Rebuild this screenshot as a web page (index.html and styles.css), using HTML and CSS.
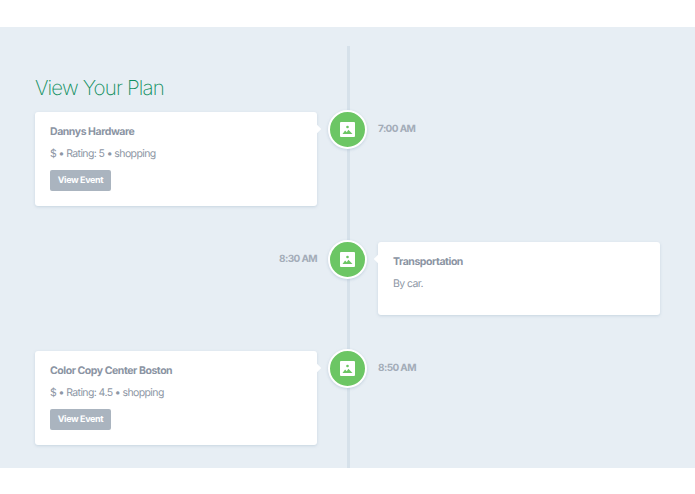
FILE: index.html
```html
<!DOCTYPE html>
<html lang="en">
<head>
    <meta charset="UTF-8">
    <meta name="viewport" content="width=device-width, initial-scale=1.0">
    <title>View Your Plan</title>
    <link rel="stylesheet" href="styles.css">
</head>
<body>

<div class="plan">
    <div class="line"></div>
    <h1>View Your Plan</h1>

    <div class="row">
        <div class="card card-left">
            <h3>Dannys Hardware</h3>
            <p>$ • Rating: 5 • shopping</p>
            <a class="btn">View Event</a>
        </div>
        <div class="dot">
            <svg viewBox="0 0 15 15" width="15" height="15"><path fill="#fff" d="M1 0h13a1 1 0 0 1 1 1v13a1 1 0 0 1-1 1H1a1 1 0 0 1-1-1V1a1 1 0 0 1 1-1z"/><circle cx="7.5" cy="5" r="1.3" fill="#6cc664"/><path fill="#6cc664" d="M2.5 12l2.6-3.6 1.7 1.9 1.6-2.6 4.1 4.3z"/></svg>
        </div>
        <div class="time">7:00 AM</div>
    </div>

    <div class="row">
        <div class="time time-left">8:30 AM</div>
        <div class="dot">
            <svg viewBox="0 0 15 15" width="15" height="15"><path fill="#fff" d="M1 0h13a1 1 0 0 1 1 1v13a1 1 0 0 1-1 1H1a1 1 0 0 1-1-1V1a1 1 0 0 1 1-1z"/><circle cx="7.5" cy="5" r="1.3" fill="#6cc664"/><path fill="#6cc664" d="M2.5 12l2.6-3.6 1.7 1.9 1.6-2.6 4.1 4.3z"/></svg>
        </div>
        <div class="card card-right">
            <h3>Transportation</h3>
            <p>By car.</p>
        </div>
    </div>

    <div class="row">
        <div class="card card-left">
            <h3>Color Copy Center Boston</h3>
            <p>$ • Rating: 4.5 • shopping</p>
            <a class="btn">View Event</a>
        </div>
        <div class="dot">
            <svg viewBox="0 0 15 15" width="15" height="15"><path fill="#fff" d="M1 0h13a1 1 0 0 1 1 1v13a1 1 0 0 1-1 1H1a1 1 0 0 1-1-1V1a1 1 0 0 1 1-1z"/><circle cx="7.5" cy="5" r="1.3" fill="#6cc664"/><path fill="#6cc664" d="M2.5 12l2.6-3.6 1.7 1.9 1.6-2.6 4.1 4.3z"/></svg>
        </div>
        <div class="time">8:50 AM</div>
    </div>
</div>

</body>
</html>
```

FILE: styles.css
```css
body {
    font-family: "Inter", "Open Sans", sans-serif;
    text-rendering: geometricPrecision;
    background-color: #fff;
    margin: 0;
    height: 494px;
    overflow: hidden;
}
.plan {
    position: relative;
    margin-top: 27px;
    height: 441px;
    padding: 46px 35px 0;
    box-sizing: border-box;
    background-color: #e7eef4;
}
.line {
    position: absolute;
    left: 347px;
    top: 19px;
    bottom: 0;
    width: 3px;
    background-color: #d6e1ea;
}
h1 {
    margin: 0 0 9px;
    font-size: 20.5px;
    line-height: 30px;
    font-weight: 200;
    letter-spacing: -0.85px;
    color: #0f8f60;
}
.row {
    position: relative;
    display: grid;
    grid-template-columns: 282px 1fr 282px;
    margin-bottom: 36px;
}
.card {
    position: relative;
    background-color: #fff;
    border-radius: 3px;
    box-shadow: 0 1px 3px rgba(140, 165, 190, 0.35);
    padding: 12px 15px 15px;
}
.card::after {
    content: "";
    position: absolute;
    top: 14px;
    width: 6px;
    height: 6px;
    background-color: #fff;
    transform: rotate(45deg);
}
.card-left::after {
    right: -3px;
}
.card-right::after {
    left: -3px;
}
.card h3 {
    margin: 0 0 6px;
    font-size: 10.5px;
    line-height: 16px;
    font-weight: 700;
    letter-spacing: -0.45px;
    color: #8b94a3;
}
.card p {
    margin: 0 0 8px;
    font-size: 10.5px;
    line-height: 16px;
    letter-spacing: -0.6px;
    color: #8e97a5;
}
.btn {
    display: block;
    width: 61px;
    height: 21px;
    line-height: 21px;
    border-radius: 2px;
    text-align: center;
    font-size: 9px;
    font-weight: 700;
    letter-spacing: -0.35px;
    color: #fff;
    background-color: #aab4bf;
}
.dot {
    justify-self: center;
    display: flex;
    align-items: center;
    justify-content: center;
    position: relative;
    width: 35px;
    height: 35px;
    margin-top: -2px;
    border: 2px solid #fff;
    border-radius: 50%;
    background-color: #6cc664;
    box-shadow: 0 1px 3px rgba(140, 165, 190, 0.4);
}
.time {
    padding-top: 9px;
    font-size: 10px;
    line-height: 16px;
    font-weight: 700;
    letter-spacing: -0.6px;
    color: #a3acb8;
}
.time-left {
    text-align: right;
}
```
